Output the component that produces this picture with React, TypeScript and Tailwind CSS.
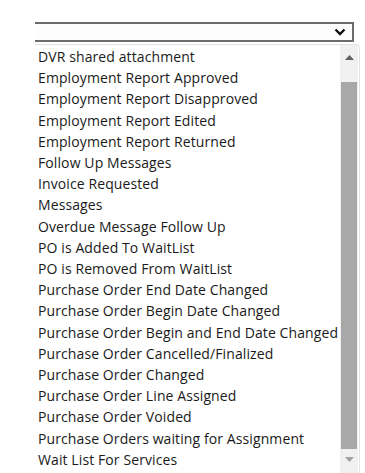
import React from 'react';

const ITEMS = [
  'DVR shared attachment',
  'Employment Report Approved',
  'Employment Report Disapproved',
  'Employment Report Edited',
  'Employment Report Returned',
  'Follow Up Messages',
  'Invoice Requested',
  'Messages',
  'Overdue Message Follow Up',
  'PO is Added To WaitList',
  'PO is Removed From WaitList',
  'Purchase Order End Date Changed',
  'Purchase Order Begin Date Changed',
  'Purchase Order Begin and End Date Changed',
  'Purchase Order Cancelled/Finalized',
  'Purchase Order Changed',
  'Purchase Order Line Assigned',
  'Purchase Order Voided',
  'Purchase Orders waiting for Assignment',
  'Wait List For Services',
];

export default function App() {
  return (
    <div className="h-[473px] w-[365px] overflow-hidden bg-white pt-[22px] pl-[35px] font-['Open_Sans',sans-serif] text-[#1a1a1a]">
      {/* closed select */}
      <div className="flex h-[20px] w-[319px] items-center justify-end border-y-2 border-r-2 border-[#6b6b6b] bg-[#fdfdfd] pr-[6px]">
        <svg width="12" height="8" viewBox="0 0 12 8">
          <path d="M1.5 1.5 L6 6 L10.5 1.5" fill="none" stroke="#111" strokeWidth="2.4" />
        </svg>
      </div>

      {/* open list */}
      <div className="mt-[2px] flex h-[440px] w-[325px] rounded-tr-[4px] border-t border-r border-[#e2e2e2]">
        <ul className="flex-1 pt-[1px] pl-[3px] text-[14px] leading-[21.2px] tracking-[0.1px]">
          {ITEMS.map((item) => (
            <li key={item} className="whitespace-nowrap">
              {item}
            </li>
          ))}
        </ul>
        <div className="mr-[1px] flex w-[18px] flex-col items-center bg-[#f0f0f0]">
          <div className="flex h-[37px] items-center justify-center pb-[13px]">
            <svg width="9" height="5" viewBox="0 0 9 5">
              <path d="M0 5 L4.5 0 L9 5 Z" fill="#606060" />
            </svg>
          </div>
          <div className="h-[367px] w-[16px] bg-[#a8a8a8]" />
          <div className="flex h-[20px] items-center justify-center">
            <svg width="9" height="5" viewBox="0 0 9 5">
              <path d="M0 0 L4.5 5 L9 0 Z" fill="#a0a0a0" />
            </svg>
          </div>
        </div>
      </div>
    </div>
  );
}
